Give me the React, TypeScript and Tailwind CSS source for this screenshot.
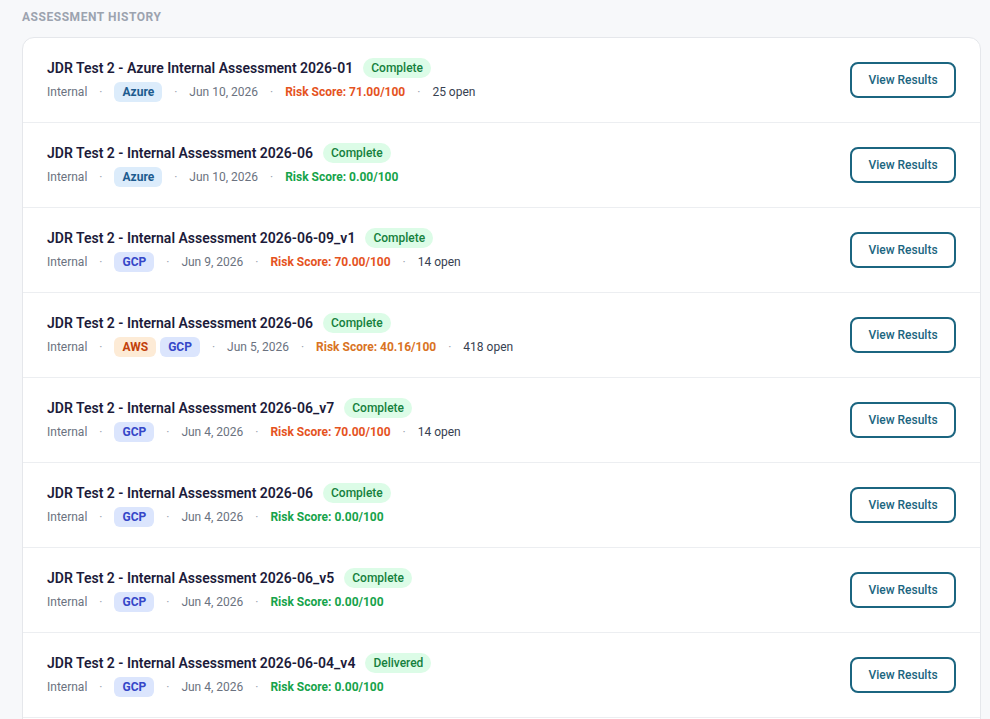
import React from "react";

type Cloud = "Azure" | "GCP" | "AWS";
type Row = {
  title: string;
  status: string;
  clouds: Cloud[];
  date: string;
  score: string;
  tone: "red" | "amber" | "green";
  open?: string;
};

const rows: Row[] = [
  { title: "JDR Test 2 - Azure Internal Assessment 2026-01", status: "Complete", clouds: ["Azure"], date: "Jun 10, 2026", score: "71.00", tone: "red", open: "25 open" },
  { title: "JDR Test 2 - Internal Assessment 2026-06", status: "Complete", clouds: ["Azure"], date: "Jun 10, 2026", score: "0.00", tone: "green" },
  { title: "JDR Test 2 - Internal Assessment 2026-06-09_v1", status: "Complete", clouds: ["GCP"], date: "Jun 9, 2026", score: "70.00", tone: "red", open: "14 open" },
  { title: "JDR Test 2 - Internal Assessment 2026-06", status: "Complete", clouds: ["AWS", "GCP"], date: "Jun 5, 2026", score: "40.16", tone: "amber", open: "418 open" },
  { title: "JDR Test 2 - Internal Assessment 2026-06_v7", status: "Complete", clouds: ["GCP"], date: "Jun 4, 2026", score: "70.00", tone: "red", open: "14 open" },
  { title: "JDR Test 2 - Internal Assessment 2026-06", status: "Complete", clouds: ["GCP"], date: "Jun 4, 2026", score: "0.00", tone: "green" },
  { title: "JDR Test 2 - Internal Assessment 2026-06_v5", status: "Complete", clouds: ["GCP"], date: "Jun 4, 2026", score: "0.00", tone: "green" },
  { title: "JDR Test 2 - Internal Assessment 2026-06-04_v4", status: "Delivered", clouds: ["GCP"], date: "Jun 4, 2026", score: "0.00", tone: "green" },
];

function CloudBadge({ c }: { c: Cloud }) {
  if (c === "Azure")
    return <span className="inline-flex h-5 items-center rounded-md bg-[#dcecfb] px-2 text-xs font-bold text-[#1d5b8f]">Azure</span>;
  if (c === "AWS")
    return <span className="inline-flex h-5 items-center rounded-md bg-[#fdebd6] px-2 text-xs font-bold text-[#c2410c]">AWS</span>;
  return <span className="inline-flex h-5 items-center rounded-md bg-[#dbe5fd] px-2 text-xs font-bold text-[#3547c8]">GCP</span>;
}

function Dot() {
  return <span className="text-[#9ca3af] text-xs">·</span>;
}

function Score({ r }: { r: Row }) {
  const cls =
    r.tone === "red" ? "text-[#e5531e]" : r.tone === "amber" ? "text-[#d97324]" : "text-[#16a34a]";
  return <span className={`text-xs font-bold ${cls}`}>Risk Score: {r.score}/100</span>;
}

export default function App() {
  return (
    <div className="h-[719px] overflow-hidden bg-[#f7f8fa] pl-[22px] pr-[9px] pt-[10px]" style={{ fontFamily: "Roboto, 'Noto Sans', sans-serif" }}>
      <div className="text-xs font-bold uppercase tracking-[0.045em] text-[#9ca3af] leading-[15px]">Assessment History</div>
      <div className="mt-3 overflow-hidden rounded-t-xl border border-[#e5e7eb] bg-white">
        {rows.map((r, i) => (
          <div key={i} className={`flex items-center justify-between px-6 py-5 ${i > 0 ? "border-t border-[#eceef1]" : ""}`}>
            <div className="flex flex-col gap-1">
              <div className="flex h-5 items-center gap-2.5">
                <span className="text-sm font-semibold text-[#1c1b3a]">{r.title}</span>
                <span className="inline-flex h-5 items-center rounded-full bg-[#dcfce7] px-2 text-xs font-medium text-[#15803d]">{r.status}</span>
              </div>
              <div className="flex h-5 items-center gap-3 text-xs text-[#6b7280]">
                <span>Internal</span>
                <Dot />
                <div className="flex items-center gap-1">
                  {r.clouds.map((c) => (
                    <CloudBadge key={c} c={c} />
                  ))}
                </div>
                <Dot />
                <span>{r.date}</span>
                <Dot />
                <Score r={r} />
                {r.open && (
                  <>
                    <Dot />
                    <span className="text-[#374151]">{r.open}</span>
                  </>
                )}
              </div>
            </div>
            <button className="h-9 w-[106px] rounded-lg border-2 border-[#1b6580] text-xs font-medium text-[#1b6580]">View Results</button>
          </div>
        ))}
        <div className="h-4 border-t border-[#eceef1]" />
      </div>
    </div>
  );
}
